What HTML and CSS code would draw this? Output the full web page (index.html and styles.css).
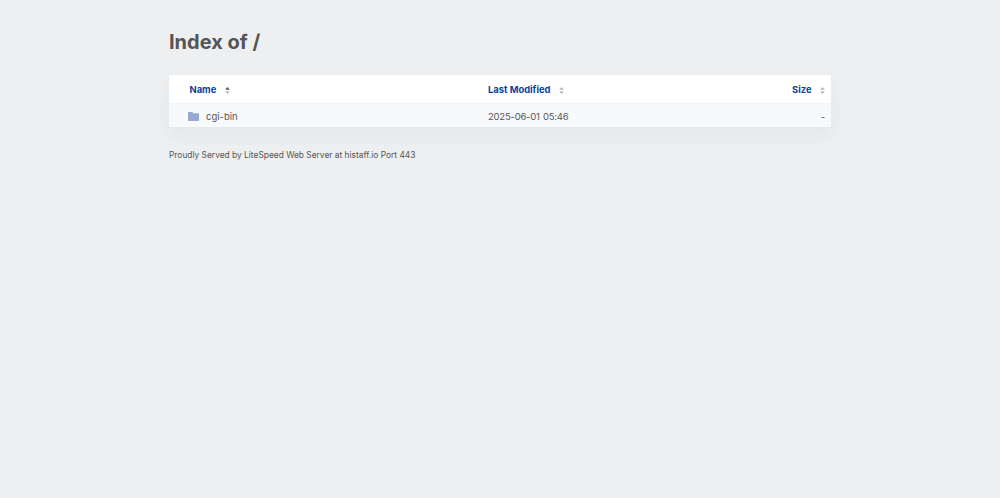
FILE: index.html
```html
<!DOCTYPE html>
<html lang="en">
<head>
<meta charset="utf-8">
<title>Index of /</title>
<link rel="stylesheet" href="styles.css">
</head>
<body>
<main class="wrap">
  <h1 class="title">Index of /</h1>
  <table class="listing">
    <thead>
      <tr class="head">
        <th class="col-name"><a href="#">Name</a><svg class="sort" viewBox="0 0 6 9"><path class="dark" d="M3 0 6 3.4H0Z"/><path d="M3 9 0 5.6H6Z"/></svg></th>
        <th class="col-date"><a href="#">Last Modified</a><svg class="sort" viewBox="0 0 6 9"><path d="M3 0 6 3.4H0Z"/><path d="M3 9 0 5.6H6Z"/></svg></th>
        <th class="col-size"><a href="#">Size</a><svg class="sort" viewBox="0 0 6 9"><path d="M3 0 6 3.4H0Z"/><path d="M3 9 0 5.6H6Z"/></svg></th>
      </tr>
    </thead>
    <tbody>
      <tr class="row">
        <td class="col-name"><span class="entry"><svg class="folder" viewBox="0 0 11 9"><path d="M1 0H4.2L5.4 1.3H10A1 1 0 0 1 11 2.3V8A1 1 0 0 1 10 9H1A1 1 0 0 1 0 8V1A1 1 0 0 1 1 0Z"/></svg><span>cgi-bin</span></span></td>
        <td class="col-date">2025-06-01 05:46</td>
        <td class="col-size">-</td>
      </tr>
    </tbody>
  </table>
  <p class="footer">Proudly Served by LiteSpeed Web Server at histaff.io Port 443</p>
</main>
</body>
</html>
```
FILE: styles.css
```css
html, body { margin: 0; padding: 0; }
body {
  min-height: 498px;
  background: #edeff1;
  color: #555;
  font-family: Inter, "Liberation Sans", sans-serif;
}
.wrap { width: 662px; margin: 0 auto; }
.title {
  margin: 0;
  padding-top: 29px;
  height: 46px;
  font-size: 20px;
  line-height: 27px;
  font-weight: 700;
  color: #555;
}
.listing {
  width: 662px;
  border-collapse: collapse;
  table-layout: fixed;
  background: #fff;
  box-shadow: 0 8px 14px rgba(200, 212, 212, .25);
}
.head { height: 28px; }
.head th {
  font-size: 9.4px;
  font-weight: 700;
  padding: 2px 0 0;
  border-bottom: 1px solid #f1f3f5;
}
.head a { color: #0a3f9e; text-decoration: none; }
.sort { width: 5px; height: 7px; margin-left: 8.5px; vertical-align: -1px; }
.sort path { fill: #b4b9bf; }
.sort .dark { fill: #555; }
.row { height: 24px; background: #f8f9fb; }
.row td { font-size: 9.5px; padding: 2px 0 0; color: #555; }
.row .col-date { letter-spacing: -.22px; word-spacing: .8px; }
.col-name { width: 298.5px; text-align: left; padding-left: 20.5px !important; }
.col-date { width: 250px; text-align: left; }
.col-size { text-align: right; padding-right: 6px !important; }
.entry { display: flex; align-items: center; margin-left: -1.5px; gap: 7px; }
.folder { width: 11px; height: 9px; fill: #94a9d3; }
.footer { margin: 22px 0 0; font-size: 8.4px; line-height: 12px; color: #555; }
```
